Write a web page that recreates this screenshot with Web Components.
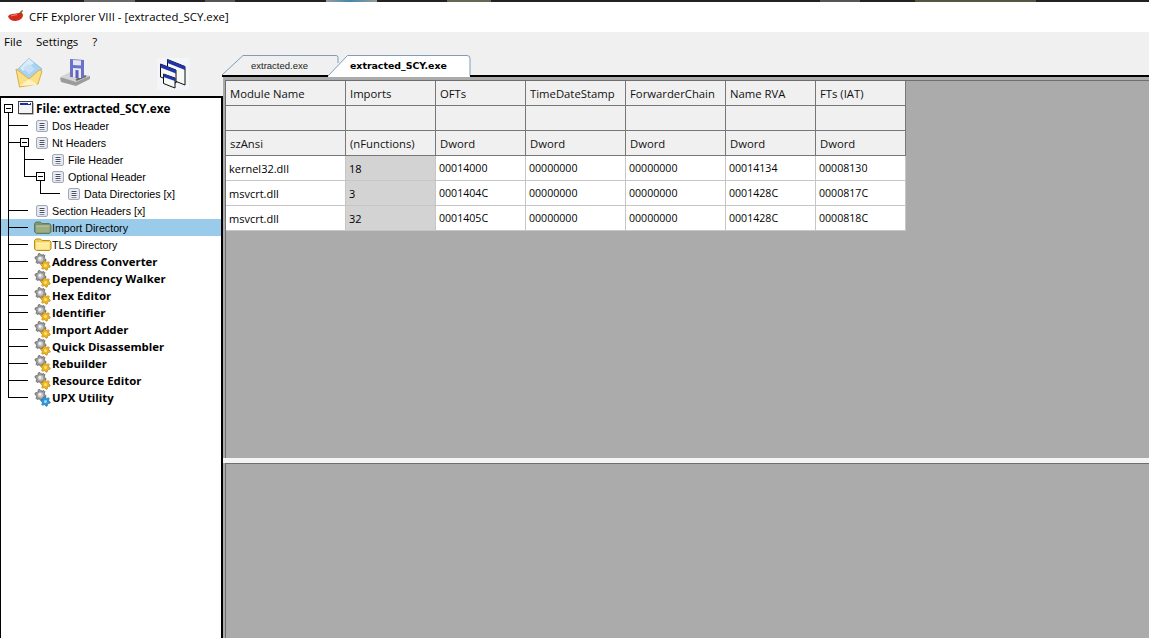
<!DOCTYPE html>
<html>
<head>
<meta charset="utf-8">
<title>CFF Explorer VIII</title>
<style>
  html, body { margin: 0; height: 100%; overflow: hidden; background: #f0f0f0; }
  body { font-family: "Open Sans", "Liberation Sans", sans-serif; color: #000; }
</style>
</head>
<body>
<cff-window></cff-window>

<script>
// teeth of a gear as a path, easier than writing every point out
function gear(cx, cy, ro, ri, teeth) {
  let d = '';
  for (let i = 0; i < teeth * 4; i++) {
    const r = (i % 4 < 2) ? ro : ri;
    const a = (i + 0.5) / (teeth * 4) * Math.PI * 2;
    d += (i ? 'L' : 'M') + (cx + r * Math.cos(a)).toFixed(1) + ' ' + (cy + r * Math.sin(a)).toFixed(1);
  }
  return d + 'z';
}

function toolIcon(fill, edge, hole) {
  return `<svg width="18" height="18" viewBox="0 0 18 18">
    <path d="${gear(6.5, 6, 5.6, 4.2, 6)}" fill="#9a9a9a" stroke="#555" stroke-width=".7"/>
    <circle cx="6.5" cy="6" r="2.800" fill="#c4c4c4"/>
    <circle cx="6" cy="5.500" r="1.400" fill="#f2f2f2"/>
    <path d="${gear(11.5, 12.5, 4.8, 3.4, 6)}" fill="${fill}" stroke="${edge}" stroke-width=".6"/>
    <circle cx="11.500" cy="12.500" r="1.500" fill="${hole}"/>
  </svg>`;
}

const ICONS = {
  page: `<svg width="12" height="12" viewBox="0 0 12 12" style="margin-left:2px"><rect x=".5" y=".5" width="11" height="11" rx="1.500" fill="#e4e7ef" stroke="#a2a9ba"/><rect x="3" y="2" width="6" height="8" fill="#f4f5f9"/><path d="M3.500 3.500h5M3.500 5.500h5M3.500 7.500h5" stroke="#4a5060"/><path d="M3.500 9.500h5" stroke="#8a90a0"/></svg>`,
  folderOpen: `<svg width="18" height="14" viewBox="0 0 18 14"><path d="M.5 11V2.500L2 1h4.500L8 2.500h7.500L17 4v7l-1.500 1.500h-13z" fill="#7d9470" stroke="#5d7a62"/><path d="M2 5h13.500v6.500H2z" fill="#9cad82"/><path d="M2 5h13.500" stroke="#c6d1ae"/></svg>`,
  folder: `<svg width="18" height="14" viewBox="0 0 18 14"><path d="M.5 11V2.500L2 1h4.500L8 2.500h7.500L17 4v7l-1.500 1.500h-13z" fill="#f4cf52" stroke="#b88e22"/><path d="M2 5h13.500v6.500H2z" fill="#fde99a"/><path d="M2 5h13.500" stroke="#fff6cc"/></svg>`,
  gear: toolIcon('#f0b41c', '#a87810', '#fbe384'),
  gearBlue: toolIcon('#2f98dc', '#1a66a4', '#a4dbf8'),
  win: `<svg width="16" height="14" viewBox="0 0 16 14"><rect x=".5" y=".5" width="14" height="12" fill="#f4f4f4" stroke="#444"/><path d="M15.500 1.500v12h-14" fill="none" stroke="#bbb"/><rect x="2" y="2" width="11" height="2" fill="#1a2fa8"/><path d="M10 2.500h2" stroke="#fff"/></svg>`
};

class CffTitlebar extends HTMLElement {
  constructor() {
    super();
    this.attachShadow({mode: 'open'}).innerHTML = `
      <style>
        :host { display: block; height: 32px; background: #fff; font: 11.4px "Open Sans", "Liberation Sans", sans-serif; }
        .strip { height: 2px; background: linear-gradient(90deg, #222 84px, #666 84px, #666 135px, #222 135px, #222 205px, #555 205px, #555 235px, #222 235px,
          #222 326px, #999 326px, #48a 350px, #999 377px, #222 377px, #222 447px, #665 447px, #665 491px, #222 491px, #222 820px, #555 820px, #555 860px, #222 860px,
          #222 915px, #554 915px, #554 1036px, #222 1036px); }
        .bar { display: flex; align-items: center; height: 28px; padding: 0 0 2px 8px; gap: 5px; }
      </style>
      <div class="strip"></div>
      <div class="bar">
        <svg width="16" height="12" viewBox="0 0 16 12">
          <path d="M0 6.500C1 4 5 4 8 3.500 10 3.200 12 2.500 13.500 2.500 15.500 4 15.500 7 13 9 9.500 12 2 12 0 6.500z" fill="#cf2c1c"/>
          <path d="M3 6c2-1 4-1 6-1.300" stroke="#f39a84" fill="none"/>
          <path d="M11.500 3c.5-1.500 1.500-2.500 3-3 .6.500.6 1.200.2 1.500-.8.300-1 1-.8 1.800z" fill="#5f8420"/>
        </svg>
        <span><slot></slot></span>
      </div>`;
  }
}

class CffMenubar extends HTMLElement {
  constructor() {
    super();
    this.attachShadow({mode: 'open'}).innerHTML = `
      <style>
        :host { display: flex; height: 19px; align-items: center; gap: 14px; padding: 0 0 1px 4px; background: #f0f0f0;
          font: 11.4px "Open Sans", "Liberation Sans", sans-serif; }
      </style>
      <slot></slot>`;
  }
}

class CffToolbar extends HTMLElement {
  constructor() {
    super();
    this.attachShadow({mode: 'open'}).innerHTML = `
      <style>
        :host { display: flex; align-items: flex-start; height: 44px; padding: 6px 0 0 15px; box-sizing: border-box; background: #f0f0f0; }
        .open { margin-right: 17px; }
        .save { margin-right: 67px; margin-top: 1px; }
      </style>
      <svg class="open" width="28" height="30" viewBox="0 0 28 30">
        <path d="M2 12 L14 .5 L27 11 L15 23z" fill="#a9d2f2" stroke="#8fbde2"/>
        <path d="M14 .5l5 4.500-11 8-3-3z" fill="#d9ecfb"/>
        <path d="M8 10l6-4 6 5-6 5z" fill="#c6e0f6"/>
        <path d="M1 11l3 2 10 8 10-9 3 1-4 13L4.500 29z" fill="#fbdf86" stroke="#dcae42"/>
        <path d="M5 28l9-7 8 5-1 1z" fill="#fff2bf"/>
      </svg>
      <svg class="save" width="30" height="28" viewBox="0 0 30 28">
        <path d="M0 19l10-5 20 3v3l-14 7-15-4z" fill="#9c9c9c"/>
        <path d="M0 18l10-5 20 4-14 6z" fill="#d4d4d4"/>
        <path d="M16 21l10-4" stroke="#6a6a6a" stroke-width="2"/>
        <path d="M10 0l14 1v18l-14-1z" fill="#6a72c8"/>
        <path d="M13 1l8 .5v5l-8-.5z" fill="#e4e6f6"/>
        <path d="M13 9l8 .5v9.500l-8-.5z" fill="#e8e9f4"/>
        <path d="M15.500 11l3 .2v8l-3-.2z" fill="#5860b8"/>
      </svg>
      <svg width="32" height="32" viewBox="0 0 32 32">
        <rect width="32" height="32" fill="#f3f5f9"/>
        <path d="M10.500 1.500l17.500 7V27l-17.500-7z" fill="#f6f9f4" stroke="#111"/>
        <path d="M10.500 1.500l17.500 7v3.500l-17.500-7z" fill="#2233b0"/>
        <path d="M3.500 6l15.500 6v13L3.500 19z" fill="#f6f9f4" stroke="#111"/>
        <path d="M3.500 6l15.500 6v3.500L3.500 9.500z" fill="#2233b0"/>
        <path d="M6.500 16l11.500 4v10l-11.500-4.500z" fill="#f6f9f4" stroke="#111"/>
        <path d="M6.500 16l11.500 4v3l-11.500-4z" fill="#2233b0"/>
      </svg>`;
  }
}

// one row of the tree, it paints its own connector lines
class TreeRow extends HTMLElement {
  constructor() {
    super();
    this.attachShadow({mode: 'open'});
  }
  connectedCallback() {
    const icon = ICONS[this.getAttribute('icon')] || '';
    const bold = this.hasAttribute('bold');
    const level = +this.getAttribute('level') || 0;
    const toggle = this.hasAttribute('toggle');
    const last = this.hasAttribute('last');
    const outer = level > 0 ? `<path d="M7.500 0v17" stroke="#000"/>` : '';
    const x = 7 + 16 * level;
    const stubEnd = toggle ? x + 12 : x + 20;
    const elbow = `<path d="M${x + .5} 0V${last ? 8.5 : 17}M${x} 8.500H${stubEnd}" stroke="#000" fill="none"/>`;
    const bx = x + 12;
    const box = toggle ? `<rect x="${bx + .5}" y="4.500" width="8" height="8" fill="#fff" stroke="#000"/><path d="M${bx + 2} 8.500h5M${bx + 4.5} 13v4" stroke="#000"/>` : '';
    this.shadowRoot.innerHTML = `
      <style>
        :host { display: block; position: relative; height: 17px; }
        :host([selected]) { background: #9bcbea; }
        .lines { position: absolute; left: 0; top: 0; }
        .row { position: relative; display: flex; align-items: center; height: 17px; padding-left: ${33 + 16 * level}px; }
        .icon { display: flex; align-items: center; width: 18px; flex: none; }
        .label { white-space: nowrap; font: ${bold ? '700 11.4px "Open Sans"' : '400 10.7px "Liberation Sans"'}, "Liberation Sans", sans-serif; }
      </style>
      <svg class="lines" width="220" height="17">${outer}${elbow}${box}</svg>
      <div class="row"><span class="icon">${icon}</span><span class="label"><slot></slot></span></div>`;
  }
}

class CffTree extends HTMLElement {
  constructor() {
    super();
    this.attachShadow({mode: 'open'}).innerHTML = `
      <style>
        :host { display: block; width: 223px; flex: none; background: #fff; box-sizing: border-box;
          border-top: 2px solid #000; border-left: 1px solid #000; border-right: 2px solid #000; padding-top: 2px; }
        .root { display: flex; align-items: center; height: 16px; padding-bottom: 1px; position: relative; padding-left: 17px; gap: 2px;
          font: 700 11.8px "Open Sans", "Liberation Sans", sans-serif; }
        .root svg.tog { position: absolute; left: 3px; top: 4px; }
      </style>
      <div class="root">
        <svg class="tog" width="9" height="13"><rect x=".5" y=".5" width="8" height="8" fill="#fff" stroke="#000"/><path d="M2 4.500h5M4.500 9v4" stroke="#000"/></svg>
        ${ICONS.win}<span>File: extracted_SCY.exe</span>
      </div>
      <slot></slot>`;
  }
}

class TabStrip extends HTMLElement {
  constructor() {
    super();
    this.attachShadow({mode: 'open'}).innerHTML = `
      <style>
        :host { display: block; height: 25px; position: relative; flex: none; background: #f0f0f0; font: 9.5px "Liberation Sans", sans-serif; }
        svg { position: absolute; left: 0; top: 0; overflow: visible; }
        .t1 { position: absolute; left: 28px; top: 8px; color: #222; white-space: nowrap; }
        .t2 { position: absolute; left: 127px; top: 8px; font: 700 9.4px "DejaVu Sans", "Liberation Sans", sans-serif; white-space: nowrap; }
      </style>
      <svg width="926" height="25">
        <path d="M-1 23L20 3.500H113q2 0 2 2V11" fill="none" stroke="#7f9db9"/>
        <path d="M105 24L124.500 3.500H244q3 0 3 3V25H105z" fill="#fff"/>
        <path d="M105 24L124.500 3.500H244q3 0 3 3V24" fill="none" stroke="#7f9db9"/>
        <path d="M-1 24H105M247 24H926" stroke="#000" stroke-width="2"/>
      </svg>
      <div class="t1">extracted.exe</div>
      <div class="t2">extracted_SCY.exe</div>`;
  }
}

class PeGrid extends HTMLElement {
  constructor() {
    super();
    const widths = [120, 90, 90, 100, 100, 90, 90];
    const head = ['Module Name','Imports','OFTs','TimeDateStamp','ForwarderChain','Name RVA','FTs (IAT)'];
    const types = ['szAnsi','(nFunctions)','Dword','Dword','Dword','Dword','Dword'];
    const rows = [
      ['kernel32.dll','18','00014000','00000000','00000000','00014134','00008130'],
      ['msvcrt.dll','3','0001404C','00000000','00000000','0001428C','0000817C'],
      ['msvcrt.dll','32','0001405C','00000000','00000000','0001428C','0000818C'],
    ];
    const cell = (t, c) => `<div class="c ${c}">${t}</div>`;
    this.attachShadow({mode: 'open'}).innerHTML = `
      <style>
        :host { display: block; width: 680px; font: 11.3px "Open Sans", "Liberation Sans", sans-serif; }
        .g { display: grid; grid-template-columns: ${widths.join('px ')}px; grid-auto-rows: 25px; }
        .c { box-sizing: border-box; display: flex; align-items: center; white-space: nowrap; overflow: hidden; padding-left: 4px; }
        .h { background: #f0f0f0; border-right: 1px solid #777; border-bottom: 1px solid #777; color: #111; }
        .d, .s, .n { border-right: 1px solid #c6c6c6; border-bottom: 1px solid #c6c6c6; padding-left: 3px; }
        .d { background: #fff; font-size: 10.6px; }
        .n { background: #fff; font-size: 11px; }
        .s { background: #d3d3d3; font-size: 11px; }
      </style>
      <div class="g">
        ${head.map(t => cell(t, 'h')).join('')}
        ${head.map(() => cell('', 'h')).join('')}
        ${types.map(t => cell(t, 'h')).join('')}
        ${rows.map(r => r.map((t, i) => cell(t, i === 0 ? 'n' : i === 1 ? 's' : 'd')).join('')).join('')}
      </div>`;
  }
}

class GridPane extends HTMLElement {
  constructor() {
    super();
    this.attachShadow({mode: 'open'}).innerHTML = `
      <style>
        :host { display: block; background: #ababab; box-sizing: border-box; padding-left: 2px; }
        :host([top]) { padding-top: 3px; }
        .frame { height: 100%; box-sizing: border-box; border-top: 1px solid #6e6e6e; border-left: 1px solid #6e6e6e; }
      </style>
      <div class="frame"><slot></slot></div>`;
  }
}

class CffWindow extends HTMLElement {
  constructor() {
    super();
    this.attachShadow({mode: 'open'}).innerHTML = `
      <style>
        :host { display: flex; flex-direction: column; height: 638px; width: 1149px; background: #f0f0f0; overflow: hidden; }
        .main { display: flex; flex: 1; min-height: 0; }
        .left { width: 223px; flex: none; display: flex; flex-direction: column; }
        cff-tree { flex: 1; }
        .right { flex: 1; display: flex; flex-direction: column; min-width: 0; }
        .top { height: 381px; flex: none; }
        .splitter { height: 5px; flex: none; background: #f4f4f4; margin-left: 1px; }
        .bottom { flex: 1; }
      </style>
      <cff-titlebar>CFF Explorer VIII - [extracted_SCY.exe]</cff-titlebar>
      <cff-menubar><span>File</span><span>Settings</span><span>?</span></cff-menubar>
      <div class="main">
        <div class="left">
          <cff-toolbar></cff-toolbar>
          <cff-tree>
            <tree-row icon="page">Dos Header</tree-row>
            <tree-row icon="page" toggle>Nt Headers</tree-row>
            <tree-row icon="page" level="1">File Header</tree-row>
            <tree-row icon="page" level="1" toggle last>Optional Header</tree-row>
            <tree-row icon="page" level="2" last>Data Directories [x]</tree-row>
            <tree-row icon="page">Section Headers [x]</tree-row>
            <tree-row icon="folderOpen" selected>Import Directory</tree-row>
            <tree-row icon="folder">TLS Directory</tree-row>
            <tree-row icon="gear" bold>Address Converter</tree-row>
            <tree-row icon="gear" bold>Dependency Walker</tree-row>
            <tree-row icon="gear" bold>Hex Editor</tree-row>
            <tree-row icon="gear" bold>Identifier</tree-row>
            <tree-row icon="gear" bold>Import Adder</tree-row>
            <tree-row icon="gear" bold>Quick Disassembler</tree-row>
            <tree-row icon="gear" bold>Rebuilder</tree-row>
            <tree-row icon="gear" bold>Resource Editor</tree-row>
            <tree-row icon="gearBlue" bold last>UPX Utility</tree-row>
          </cff-tree>
        </div>
        <div class="right">
          <tab-strip></tab-strip>
          <grid-pane class="top" top><pe-grid></pe-grid></grid-pane>
          <div class="splitter"></div>
          <grid-pane class="bottom"></grid-pane>
        </div>
      </div>`;
  }
}

customElements.define('cff-titlebar', CffTitlebar);
customElements.define('cff-menubar', CffMenubar);
customElements.define('cff-toolbar', CffToolbar);
customElements.define('tree-row', TreeRow);
customElements.define('cff-tree', CffTree);
customElements.define('tab-strip', TabStrip);
customElements.define('pe-grid', PeGrid);
customElements.define('grid-pane', GridPane);
customElements.define('cff-window', CffWindow);
</script>
</body>
</html>
